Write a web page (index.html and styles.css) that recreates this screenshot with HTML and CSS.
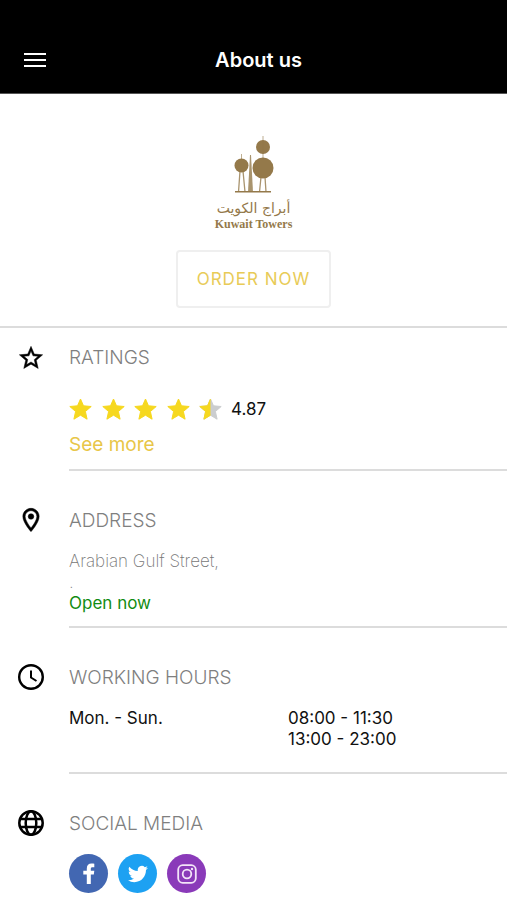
FILE: index.html
```html
<!DOCTYPE html>
<html lang="en">

<head>
    <meta charset="UTF-8">
    <meta name="viewport" content="width=device-width, initial-scale=1.0">
    <title>About us</title>
    <link rel="stylesheet" href="styles.css">
</head>

<body>

    <header class="topbar">
        <button class="menu" type="button" aria-label="Menu">
            <svg width="24" height="18" viewBox="0 0 24 18">
                <path d="M1 2h22M1 8h22M1 14h22" stroke="#fff" stroke-width="2" />
            </svg>
        </button>
        <h1>About us</h1>
    </header>

    <main>
        <div class="brand">
            <!-- towers -->
            <svg class="towers" width="44" height="58" viewBox="0 0 44 58" fill="#94794a">
                <circle cx="31" cy="11" r="7" />
                <circle cx="31" cy="32" r="10.5" />
                <circle cx="9.500" cy="29.500" r="7" />
                <path d="M30.500 0h1v24h-1zM9 18h1v6H9z" opacity=".6" />
                <path d="M18 19h1l2 37h-5z" opacity=".8" />
                <path d="M8 35L6.500 56M11 35l2 21M29 41l-1.500 15M33 41l1 15" stroke="#94794a" stroke-width="1.300" opacity=".8" />
                <path d="M3 55h36v1.500H3z" />
            </svg>
            <p class="name-ar" lang="ar" dir="rtl">أبراج الكويت</p>
            <p class="name-en">Kuwait Towers</p>
            <button class="order" type="button">ORDER NOW</button>
        </div>

        <section class="row first">
            <svg class="icon" width="28" height="28" viewBox="0 0 24 24" stroke="#000" stroke-width=".4">
                <path d="M22 9.240l-7.190-.620L12 2 9.190 8.630 2 9.240l5.460 4.730L5.820 21 12 17.270 18.180 21l-1.630-7.030L22 9.240zM12 15.400l-3.760 2.270 1-4.280-3.320-2.880 4.380-.380L12 6.100l1.710 4.040 4.380.380-3.320 2.880 1 4.280L12 15.400z" />
            </svg>
            <div class="content">
                <h2>RATINGS</h2>
                <div class="rating">
                    <svg class="stars" width="153" height="24" viewBox="0 0 153 24" role="img" aria-label="4.87 out of 5">
                        <defs>
                            <path id="star" d="M11.500 2l3 6.800 7.700.700-5.800 5 1.700 7.700-6.600-4-6.600 4 1.700-7.700-5.800-5 7.700-.700z" stroke-width="1" stroke-linejoin="round" />
                            <clipPath id="half">
                                <path d="M0 0h11.500v24H0z" />
                            </clipPath>
                        </defs>
                        <g fill="#f6d81f" stroke="#f6d81f">
                            <use href="#star" />
                            <use href="#star" x="33" />
                            <use href="#star" x="65" />
                            <use href="#star" x="98" />
                        </g>
                        <g transform="translate(130)">
                            <use href="#star" fill="#cbcdcf" stroke="#cbcdcf" />
                            <g clip-path="url(#half)">
                                <use href="#star" fill="#f6d81f" stroke="#f6d81f" />
                            </g>
                        </g>
                    </svg>
                    <span>4.87</span>
                </div>
                <a class="more" href="#">See more</a>
            </div>
        </section>

        <section class="row">
            <svg class="icon" width="28" height="28" viewBox="0 0 24 24" stroke="#000" stroke-width=".4">
                <path d="M12 2C8.130 2 5 5.130 5 9c0 5.250 7 13 7 13s7-7.750 7-13c0-3.870-3.130-7-7-7zM7 9c0-2.760 2.240-5 5-5s5 2.240 5 5c0 2.880-2.880 7.190-5 9.880C9.920 16.210 7 11.850 7 9z" />
                <circle cx="12" cy="9" r="2.400" />
            </svg>
            <div class="content">
                <h2>ADDRESS</h2>
                <p class="street">Arabian Gulf Street,<br>.</p>
                <p class="open">Open now</p>
            </div>
        </section>

        <section class="row hours">
            <svg class="icon" width="28" height="28" viewBox="0 0 28 28" fill="none" stroke="#000">
                <circle cx="14" cy="14" r="11.800" stroke-width="2.400" />
                <path d="M14 7.500v7l5.500 3.500" stroke-width="2" />
            </svg>
            <div class="content">
                <h2>WORKING HOURS</h2>
                <table>
                    <tr>
                        <th scope="row">Mon. - Sun.</th>
                        <td>08:00 - 11:30<br>13:00 - 23:00</td>
                    </tr>
                </table>
            </div>
        </section>

        <section class="row last">
            <svg class="icon" width="28" height="28" viewBox="0 0 28 28" fill="none" stroke="#000" stroke-width="2.500">
                <circle cx="14" cy="14" r="11.700" />
                <ellipse cx="14" cy="14" rx="5.300" ry="11.700" />
                <path d="M3 10h22M3 18h22" />
            </svg>
            <div class="content">
                <h2>SOCIAL MEDIA</h2>
                <div class="social">
                    <a class="facebook" href="#" aria-label="Facebook">
                        <svg width="24" height="24" viewBox="0 0 24 24" fill="#fff">
                            <path d="M9.800 22v-9.500H6.300V8.800h3.500V6.500C9.800 3.200 11.600 1.500 14.500 1.500c1.200 0 2.200.1 2.800.2v3.600h-1.700c-1.400 0-1.800.6-1.800 1.700v1.800h3.500l-.5 3.700h-3V22z" />
                        </svg>
                    </a>
                    <a class="twitter" href="#" aria-label="Twitter">
                        <svg width="20" height="20" viewBox="0 0 24 24" fill="#fff">
                            <path d="M23.950 4.570a10 10 0 0 1-2.820.770 4.960 4.960 0 0 0 2.160-2.720c-.950.550-2 .950-3.130 1.180a4.920 4.920 0 0 0-8.380 4.480C7.690 8.090 4.070 6.130 1.640 3.160a4.920 4.920 0 0 0 1.520 6.570 4.900 4.900 0 0 1-2.230-.610v.060a4.920 4.920 0 0 0 3.950 4.830 5 5 0 0 1-2.210.080 4.940 4.940 0 0 0 4.600 3.420A9.870 9.870 0 0 1 0 19.540a14 14 0 0 0 7.550 2.210c9.050 0 14-7.500 14-13.980 0-.210 0-.420-.020-.630a9.940 9.940 0 0 0 2.460-2.550z" />
                        </svg>
                    </a>
                    <a class="instagram" href="#" aria-label="Instagram">
                        <svg width="20" height="20" viewBox="0 0 20 20" fill="none" stroke="#f3e4f8" stroke-width="1.800">
                            <rect x="1.200" y="1.200" width="17.600" height="17.600" rx="4.500" />
                            <circle cx="10" cy="10" r="4.300" />
                            <circle cx="15" cy="5" r="1.200" fill="#f3e4f8" stroke="none" />
                        </svg>
                    </a>
                </div>
            </div>
        </section>
    </main>

</body>

</html>
```
FILE: styles.css
```css
* {
    box-sizing: border-box;
}

body {
    margin: 0;
    background-color: #fff;
    color: #111;
    font-family: Inter, "Liberation Sans", sans-serif;
    font-size: 17px;
    line-height: 21px;
}

h1,
h2,
p {
    margin: 0;
}

button {
    font-family: inherit;
    cursor: pointer;
}

/* top bar */
.topbar {
    display: grid;
    grid-template-columns: 48px 1fr 38px;
    align-items: center;
    padding: 45px 11px 17px;
    background-color: #000;
    border-bottom: 1px solid #555;
}

.topbar h1 {
    color: #fff;
    font-size: 20px;
    font-weight: 600;
    line-height: 31px;
    text-align: center;
}

.menu {
    display: flex;
    justify-content: center;
    padding: 0;
    border: 0;
    background: none;
}

/* logo and order button */
.brand {
    display: flex;
    flex-flow: column;
    align-items: center;
    padding: 42px 16px 18px;
    border-bottom: 2px solid #dcdcdc;
}

.name-ar {
    margin-top: 4px;
    color: #94794a;
    font-family: "DejaVu Sans", sans-serif;
    font-size: 14px;
    line-height: 20px;
}

.name-en {
    color: #94794a;
    font-family: "Liberation Serif", serif;
    font-size: 12px;
    font-weight: 700;
    line-height: 12px;
}

.order {
    margin-top: 20px;
    padding: 17px 19px;
    border: 2px solid #efefef;
    border-radius: 4px;
    background-color: #fff;
    color: #e8cb57;
    font-size: 17px;
    letter-spacing: 1px;
    line-height: 20px;
}

/* info rows */
.row {
    display: grid;
    grid-template-columns: 69px 1fr;
}

.icon {
    margin: 35px 0 0 17px;
}

.content {
    padding: 38px 0 12px;
    border-bottom: 2px solid #dcdcdc;
}

.first .icon {
    margin-top: 16px;
}

.first .content {
    padding-top: 18px;
}

.hours .content {
    padding-bottom: 22px;
}

.last .content {
    padding-bottom: 7px;
    border-bottom: 0;
}

h2 {
    margin-bottom: 18px;
    color: #7f7f7f;
    font-size: 19px;
    font-weight: 300;
    line-height: 24px;
}

.rating {
    display: flex;
    align-items: center;
    gap: 9px;
    margin: 27px 0 12px;
}

.more {
    display: block;
    color: #e8c648;
    font-size: 19px;
    line-height: 24px;
    text-decoration: none;
}

.street {
    color: #777;
    font-weight: 200;
}

.open {
    color: #118c11;
}

table {
    width: 100%;
    table-layout: fixed;
    border-collapse: collapse;
}

th,
td {
    padding: 0;
    font-weight: 400;
    text-align: left;
    vertical-align: top;
}

.social {
    display: flex;
    gap: 10px;
}

.social a {
    display: flex;
    align-items: center;
    justify-content: center;
    width: 39px;
    height: 39px;
    border-radius: 50%;
}

.facebook {
    background-color: #4267b2;
}

.twitter {
    background-color: #1da1f2;
}

.instagram {
    background-color: #8a3ab9;
}
```
